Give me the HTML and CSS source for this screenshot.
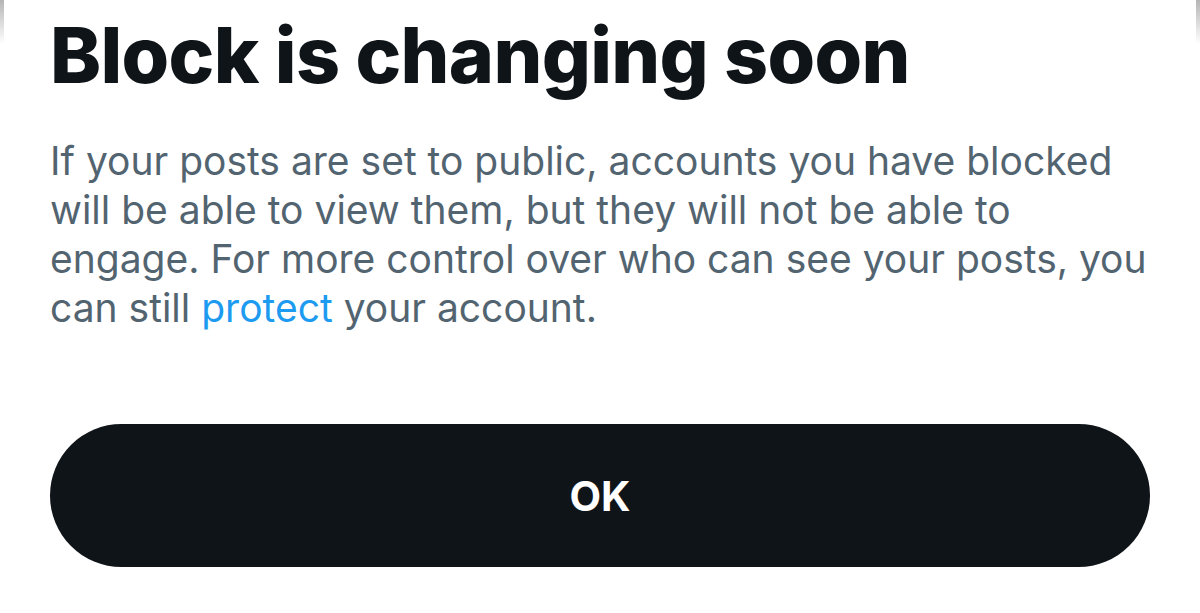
FILE: index.html
```html
<!DOCTYPE html>
<html lang="en">
<head>
<meta charset="utf-8">
<title>Block is changing soon</title>
<link rel="stylesheet" href="styles.css">
</head>
<body>
<div class="sheet">
  <h1 class="title">Block is changing soon</h1>
  <p class="body-text">If your posts are set to public, accounts you have blocked will be able to view them, but they will not be able to engage. For more control over who can see your posts, you can still <a class="link" href="#">protect</a> your account.</p>
  <button class="ok-btn" type="button">OK</button>
</div>
</body>
</html>
```

FILE: styles.css
```css
html, body {
  margin: 0;
  padding: 0;
  background: #ffffff;
}
body {
  width: 1200px;
  height: 613px;
  overflow: hidden;
  position: relative;
  font-family: Inter, "Noto Sans", "Liberation Sans", sans-serif;
}
body::before,
body::after {
  content: "";
  position: absolute;
  top: 0;
  width: 4px;
  height: 44px;
}
body::before {
  left: 0;
  background: linear-gradient(to bottom, rgba(120,120,120,0.55), rgba(120,120,120,0));
  border-bottom-right-radius: 4px;
}
body::after {
  right: 0;
  background: linear-gradient(to bottom, rgba(120,120,120,0.55), rgba(120,120,120,0));
  border-bottom-left-radius: 4px;
}
.sheet {
  display: flex;
  flex-direction: column;
  padding: 0 50px;
  box-sizing: border-box;
  width: 1200px;
}
.title {
  margin: 0;
  padding-top: 8px;
  font-size: 77px;
  line-height: 94px;
  font-weight: 800;
  color: #0f1419;
  letter-spacing: -0.7px;
}
.body-text {
  margin: 34px 0 0 0;
  font-size: 39px;
  line-height: 49px;
  font-weight: 400;
  color: #536471;
}
.link {
  color: #1d9bf0;
  text-decoration: none;
}
.ok-btn {
  margin-top: 92px;
  height: 143px;
  width: 1100px;
  border: none;
  border-radius: 72px;
  background: #0f1419;
  color: #ffffff;
  font-family: Inter, "Noto Sans", "Liberation Sans", sans-serif;
  font-size: 41px;
  font-weight: 700;
  padding: 0;
}
```
